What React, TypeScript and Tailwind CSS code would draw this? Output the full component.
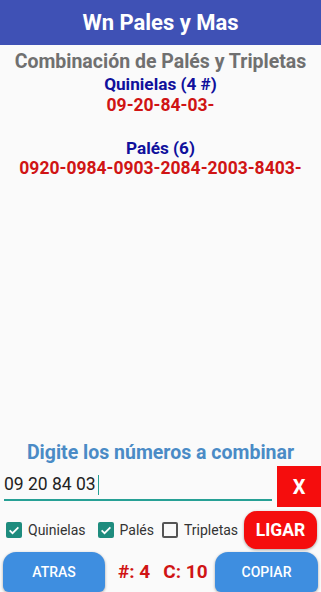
import React from "react";

function Check({ checked }: { checked: boolean }) {
  return checked ? (
    <span className="flex h-[16px] w-[16px] items-center justify-center rounded-[2px] bg-[#1e8c7e]">
      <svg viewBox="0 0 24 24" className="h-[14px] w-[14px]" fill="none" stroke="white" strokeWidth="3">
        <path d="M4.5 12.5l5 5 10-10" />
      </svg>
    </span>
  ) : (
    <span className="h-[16px] w-[16px] rounded-[2px] border-2 border-[#555]" />
  );
}

export default function App() {
  return (
    <div
      className="flex h-[592px] w-[321px] flex-col overflow-hidden bg-[#fafafa]"
      style={{ fontFamily: "Roboto, 'Liberation Sans', sans-serif" }}
    >
      <div className="flex h-[45px] items-center justify-center bg-[#3f51b5]">
        <span className="text-[22px] font-bold text-white">Wn Pales y Mas</span>
      </div>

      <div className="flex flex-1 flex-col items-center pt-[6px] text-center font-bold">
        <div className="text-[19.5px] leading-[22px] text-[#707070]">Combinación de Palés y Tripletas</div>
        <div className="text-[17.2px] leading-[22px] text-[#10109c]">Quinielas (4 #)</div>
        <div className="text-[17.5px] leading-[20px] text-[#d01414]">09-20-84-03-</div>
        <div className="h-[23px]" />
        <div className="text-[17.2px] leading-[20px] text-[#10109c]">Palés (6)</div>
        <div className="text-[17.5px] leading-[20px] text-[#d01414]">0920-0984-0903-2084-2003-8403-</div>
      </div>

      <div className="mb-[1px] text-center text-[19.5px] font-bold leading-[24px] text-[#4a8bc6]">
        Digite los números a combinar
      </div>

      <div className="flex items-stretch">
        <div className="ml-[4px] flex h-[35px] w-[268px] items-end self-start border-b-2 border-[#26a095] pb-[2px]">
          <span className="text-[17.5px] text-[#222]">09 20 84 03</span>
          <span className="mb-[2px] ml-[2px] h-[20px] w-[1.5px] bg-[#26a095]" />
        </div>
        <div className="ml-[5px] flex h-[41px] flex-1 items-center justify-center bg-[#f50d0d] text-[20px] font-bold text-white">
          X
        </div>
      </div>

      <div className="mt-[4px] flex items-center">
        <div className="ml-[6px] flex items-center gap-[6px]">
          <Check checked />
          <span className="text-[14px] text-[#333]">Quinielas</span>
        </div>
        <div className="ml-[12px] flex items-center gap-[6px]">
          <Check checked />
          <span className="text-[14px] text-[#333]">Palés</span>
        </div>
        <div className="ml-[8px] flex items-center gap-[6px]">
          <Check checked={false} />
          <span className="text-[14px] text-[#333]">Tripletas</span>
        </div>
        <div className="ml-auto mr-[4px] flex h-[38px] w-[73px] items-center justify-center rounded-[13px] bg-[#f50d0d] text-[17.5px] font-bold text-white shadow-[0_1px_3px_rgba(0,0,0,0.35)]">
          LIGAR
        </div>
      </div>

      <div className="mt-[3px] flex items-center">
        <div className="ml-[3px] flex h-[40px] w-[102px] items-center justify-center rounded-t-[13px] rounded-b-[6px] bg-[#3e8ee0] text-[14px] font-medium text-white shadow-[0_1px_3px_rgba(0,0,0,0.35)]">
          ATRAS
        </div>
        <div className="ml-[13px] flex gap-[13px] text-[19px] font-bold text-[#d01414]">
          <span>#: 4</span>
          <span>C: 10</span>
        </div>
        <div className="ml-auto mr-[3px] flex h-[40px] w-[103px] items-center justify-center rounded-t-[13px] rounded-b-[6px] bg-[#3e8ee0] text-[14px] font-medium text-white shadow-[0_1px_3px_rgba(0,0,0,0.35)]">
          COPIAR
        </div>
      </div>
    </div>
  );
}
